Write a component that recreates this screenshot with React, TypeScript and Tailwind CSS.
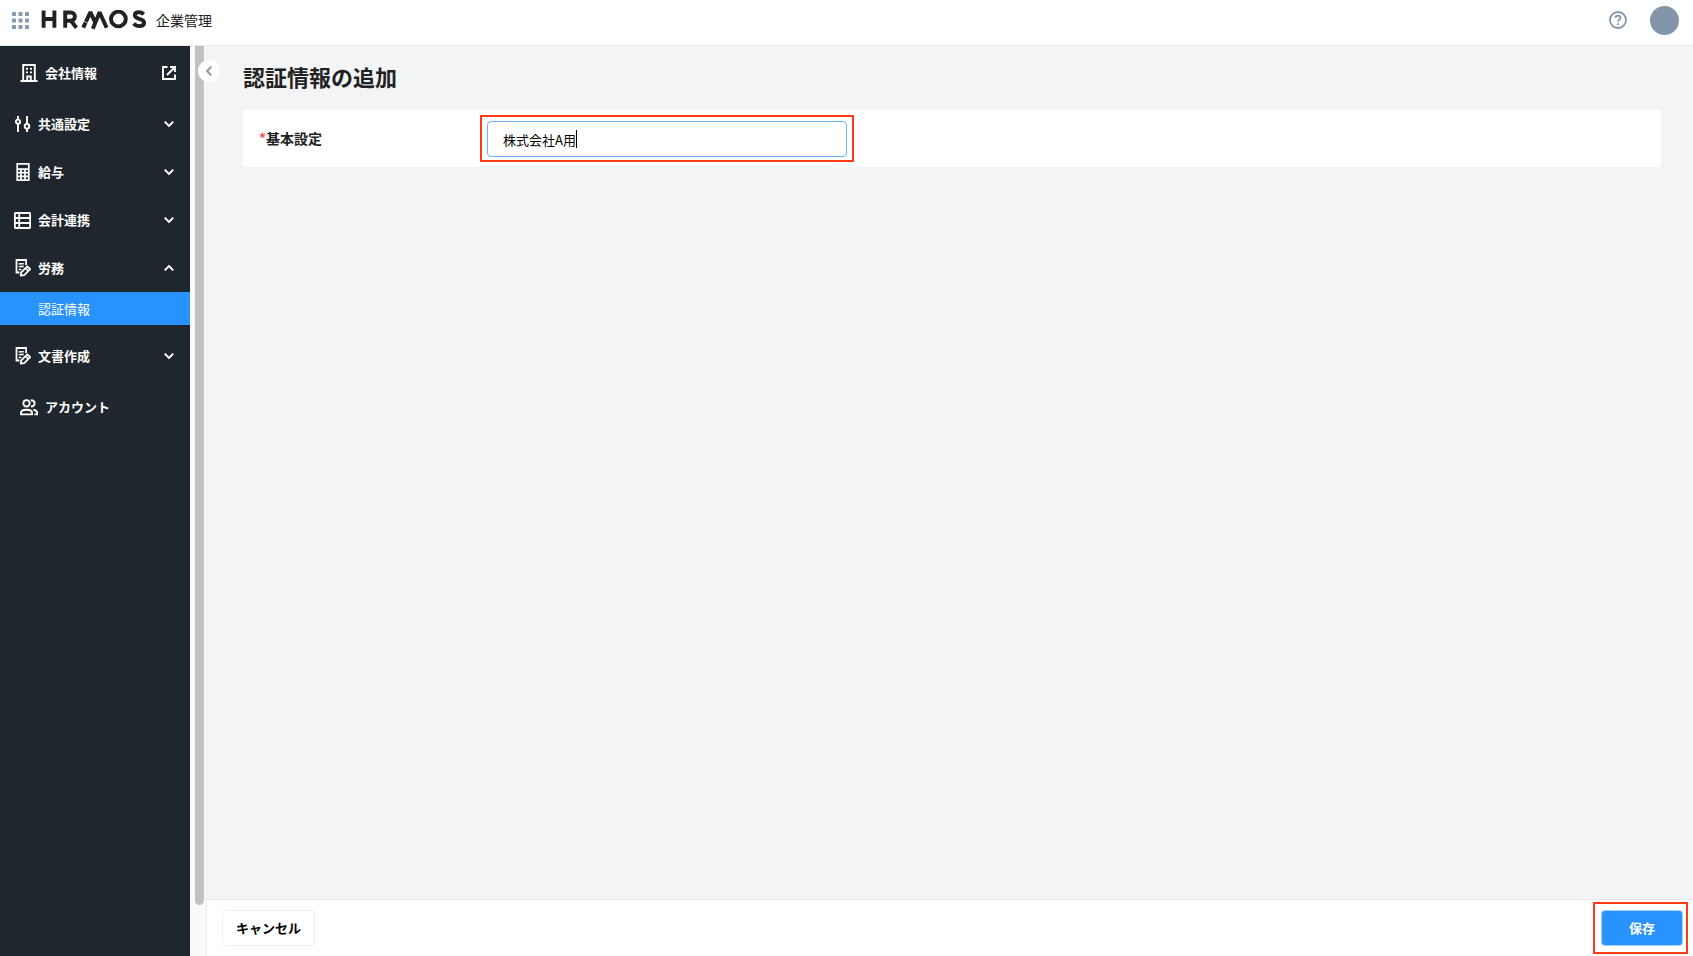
import { useState } from "react";

interface NavGroupProps {
  label: string;
  icon: React.ReactNode;
  open?: boolean;
  children?: React.ReactNode;
}

const GridIcon = () => (
  <svg width="17" height="17" viewBox="0 0 17 17" fill="#8799ae">
    {[0, 6.5, 13].map((y) =>
      [0, 6.5, 13].map((x) => <rect key={`${x}-${y}`} x={x} y={y} width="4" height="4" rx="0.6" />)
    )}
  </svg>
);

const Logo = () => (
  <svg width="105" height="20" viewBox="0 0 105 20" fill="none" stroke="#222" strokeWidth="3.900" role="img" aria-label="HRMOS">
    <path d="M2.600 0.500v17.300M13.400 0.500v17.300M2.600 9h11" />
    <path d="M24.200 17.800V2.500h5.600a4.100 4.100 0 0 1 0 8.200h-5.600M29.800 10.500l5.600 7.300" />
    <path d="M42.200 17.600L49.400 2.200L54.400 12.800M51.800 18.800L58.600 2.200L65.600 17.700" strokeLinejoin="bevel" />
    <path d="M42.800 11.200l4.400 2.100" stroke="#fff" strokeWidth="0.700" />
    <circle cx="77.400" cy="9" r="7.400" />
    <path d="M102.800 4.200c-1.600-1.400-3-1.900-4.900-1.900-2.500 0-4.100 1.100-4.100 3 0 4.600 9.300 2.300 9.300 7.300 0 2.300-1.900 3.500-4.800 3.500-2.300 0-4.100-.9-5.600-2.600" />
  </svg>
);

const BuildingIcon = () => (
  <svg width="18" height="18" viewBox="0 0 18 18" fill="none" stroke="currentColor" strokeWidth="1.900">
    <path d="M0.500 17h17M3.200 17V1h11.600v16M7.200 17v-4.500h3.600V17" />
    <path d="M6 4.800h2M10 4.800h2M6 8.400h2M10 8.400h2" />
  </svg>
);

const ExternalIcon = () => (
  <svg width="14" height="14" viewBox="0 0 14 14" fill="none" stroke="currentColor" strokeWidth="1.900">
    <path d="M5.500 1H1v12h12V8.500M8 1h5v5M13 1L5 9" />
  </svg>
);

const SlidersIcon = () => (
  <svg width="16" height="18" viewBox="0 0 16 18" fill="none" stroke="currentColor" strokeWidth="1.900">
    <path d="M3 1v3.500M3 9v8M12 1v8M12 13.500V17" />
    <circle cx="3" cy="6.700" r="2.100" />
    <circle cx="12" cy="11.300" r="2.300" />
  </svg>
);

const CalculatorIcon = () => (
  <svg width="16" height="18" viewBox="0 0 16 18" fill="none" stroke="currentColor" strokeWidth="1.700">
    <rect x="2.200" y="0.900" width="11.600" height="16.200" />
    <path d="M2 6.200h12M2 9.700h12M2 13.300h12M6 6v11M10 6v11" />
  </svg>
);

const TableIcon = () => (
  <svg width="17" height="17" viewBox="0 0 17 17" fill="none" stroke="currentColor" strokeWidth="1.800">
    <rect x="0.900" y="1" width="15.200" height="15" rx="0.500" />
    <path d="M5.200 1v15M1 6h15M1 11h15" />
  </svg>
);

const DocumentIcon = () => (
  <svg width="17" height="18" viewBox="0 0 17 18" fill="none" stroke="currentColor" strokeWidth="1.800">
    <path d="M5.500 13.500H2.500V1h9.600v5" />
    <path d="M4.800 4.700h5M4.800 7.600h5M4.800 10.500h2.500" strokeWidth="1.500" />
    <path d="M6.700 16.600l.6-3.300 6-6 2.900 2.800-6 6zM11.500 9l2.900 2.900" strokeLinejoin="round" />
  </svg>
);

const UsersIcon = () => (
  <svg width="18" height="17" viewBox="0 0 18 17" fill="none" stroke="currentColor" strokeWidth="1.900">
    <circle cx="6.500" cy="4.300" r="3.200" />
    <path d="M1 15.400v-1.600c0-2 2.600-3 5.500-3s5.500 1 5.500 3v1.600zM10.800 1.200c2.300 0 3.800 1.300 3.800 3.100s-1.500 3.200-3.600 3.200M13.400 10.800c2.400.4 3.700 1.500 3.700 3.200v1.400h-2.700" />
  </svg>
);

const Chevron = ({ up }: { up?: boolean }) => (
  <svg width="10" height="6" viewBox="0 0 10 6" fill="none" stroke="currentColor" strokeWidth="1.900">
    <path d={up ? "M0.700 5.300L5 1l4.300 4.300" : "M0.700 0.700L5 5l4.300-4.300"} />
  </svg>
);

const NavGroup = ({ label, icon, open = false, children }: NavGroupProps) => {
  const [expanded, setExpanded] = useState(open);

  return (
    <li>
      <button
        type="button"
        aria-expanded={expanded}
        className="flex h-12 w-full items-center pl-[14px] pr-4 font-bold"
        onClick={() => setExpanded(!expanded)}
      >
        <span className="flex w-[17px] justify-center">{icon}</span>
        <span className="ml-[7px] flex-1 text-left">{label}</span>
        <Chevron up={expanded} />
      </button>
      {expanded && children}
    </li>
  );
};

const Sidebar = () => (
  <nav className="w-[190px] shrink-0 bg-[#20262d] text-[13px] text-white">
    <a href="#company" className="flex h-[54px] items-center pl-5 pr-[14px] font-bold">
      <BuildingIcon />
      <span className="ml-[7px] flex-1">会社情報</span>
      <ExternalIcon />
    </a>
    <ul>
      <NavGroup label="共通設定" icon={<SlidersIcon />} />
      <NavGroup label="給与" icon={<CalculatorIcon />} />
      <NavGroup label="会計連携" icon={<TableIcon />} />
      <NavGroup label="労務" icon={<DocumentIcon />} open>
        <a href="#credentials" aria-current="page" className="mb-[7px] flex h-[33px] items-center bg-[#2892ff] pl-[38px]">
          認証情報
        </a>
      </NavGroup>
      <NavGroup label="文書作成" icon={<DocumentIcon />} />
    </ul>
    <a href="#account" className="flex h-[54px] items-center pl-5 font-bold">
      <UsersIcon />
      <span className="ml-[7px]">アカウント</span>
    </a>
  </nav>
);

const Header = () => (
  <header className="flex h-[46px] shrink-0 items-center border-b border-[#e8eaec] bg-white pb-[5px] pl-3 pr-[14px]">
    <button type="button" aria-label="アプリ一覧">
      <GridIcon />
    </button>
    <div className="ml-3">
      <Logo />
    </div>
    <span className="ml-[10px] text-[14px] text-[#222]">企業管理</span>
    <button type="button" aria-label="ヘルプ" className="ml-auto">
      <svg width="18" height="18" viewBox="0 0 18 18" fill="none" stroke="#8296ab" strokeWidth="1.800">
        <circle cx="9" cy="9" r="8" />
        <path d="M6.500 7c0-1.500 1-2.400 2.500-2.400s2.500.9 2.500 2.200c0 1.800-2.500 1.900-2.500 4M9 12.300v1.800" />
      </svg>
    </button>
    <button type="button" aria-label="ユーザーメニュー" className="ml-[23px] size-[29px] rounded-full bg-[#8395aa]" />
  </header>
);

export default function App() {
  const [name, setName] = useState("株式会社A用");

  return (
    <div className="flex h-screen flex-col font-['Noto_Sans_CJK_JP',sans-serif] text-[#222]">
      <Header />
      <div className="flex min-h-0 flex-1">
        <Sidebar />
        {/* Scroll track with the collapse button over its edge */}
        <div className="relative flex w-[17px] shrink-0 border-r border-[#ebebeb] bg-[#fafafa] pb-[51px] pl-[5px]">
          <div className="w-[9px] rounded-b-full bg-[#c1c1c1]" />
          <button
            type="button"
            aria-label="メニューを閉じる"
            className="absolute left-2 top-[14px] flex size-[22px] items-center justify-center rounded-full bg-white text-[#8296ab]"
          >
            <svg width="6" height="10" viewBox="0 0 6 10" fill="none" stroke="currentColor" strokeWidth="1.900">
              <path d="M5.300 0.700L1 5l4.300 4.300" />
            </svg>
          </button>
        </div>
        <div className="flex min-w-0 flex-1 flex-col">
          <main className="flex-1 bg-[#f3f4f6] pl-9 pr-8 pt-[14px]">
            <h1 className="text-[22px] font-bold leading-8">認証情報の追加</h1>
            <div className="mt-[18px] flex h-[57px] items-center rounded-[3px] bg-white pl-4">
              <label htmlFor="name" className="w-[221px] text-[14px] font-bold">
                <span className="text-[#ff4d4f]">*</span>基本設定
              </label>
              <div className="relative border-2 border-[#ff3a17] px-[5px] pb-[3px] pt-1">
                <input
                  id="name"
                  type="text"
                  value={name}
                  onChange={(e) => setName(e.target.value)}
                  className="block h-9 w-[360px] rounded border border-[#6ab2ff] bg-white px-[15px] text-[13px] text-black outline-none"
                />
                <span className="absolute left-[94px] top-[13px] h-[18px] w-px bg-black" />
              </div>
            </div>
          </main>
          <footer className="flex h-[57px] shrink-0 items-center justify-between border-t border-[#e8eaec] bg-white pl-[15px] pr-[5px]">
            <button type="button" className="h-9 w-[93px] rounded border border-[#eceef0] bg-white text-[13px] font-bold text-black">
              キャンセル
            </button>
            <div className="border-2 border-[#ff3a17] pb-[6px] pl-[6px] pr-[3px] pt-[6px]">
              <button type="button" className="block h-9 w-[82px] rounded border border-[#9fceff] bg-[#2892ff] text-[13px] font-bold text-white">
                保存
              </button>
            </div>
          </footer>
        </div>
      </div>
    </div>
  );
}
